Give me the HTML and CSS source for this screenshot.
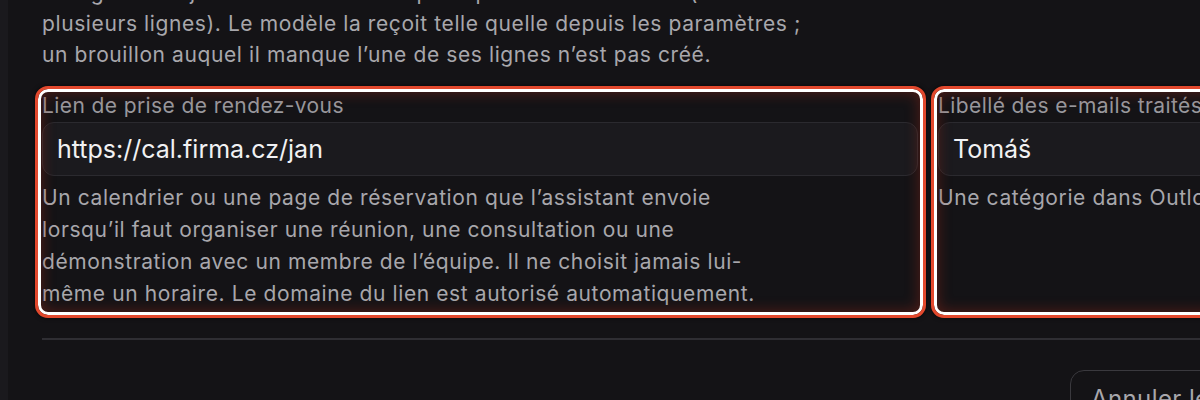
FILE: index.html
```html
<!DOCTYPE html>
<html lang="fr">
<head>
<meta charset="utf-8">
<title>Paramètres</title>
<link rel="stylesheet" href="styles.css">
</head>
<body>
<div class="app">
  <div class="rail"></div>
  <main class="main">
    <p class="intro">La signature ajoutée en bas de chaque réponse de l’assistant (sur plusieurs lignes). Le modèle la reçoit telle quelle depuis les paramètres&nbsp;; un brouillon auquel il manque l’une de ses lignes n’est pas créé.</p>

    <div class="fields">
      <div class="field hl">
        <label class="label">Lien de prise de rendez-vous</label>
        <div class="input">https://cal.firma.cz/jan</div>
        <p class="help">Un calendrier ou une page de réservation que l’assistant envoie lorsqu’il faut organiser une réunion, une consultation ou une démonstration avec un membre de l’équipe. Il ne choisit jamais lui-même un horaire. Le domaine du lien est autorisé automatiquement.</p>
      </div>
      <div class="field hl">
        <label class="label">Libellé des e-mails traités par l’assistant</label>
        <div class="input">Tomáš</div>
        <p class="help">Une catégorie dans Outlook appliquée aux e-mails déjà traités.</p>
      </div>
    </div>

    <hr class="divider">

    <div class="actions">
      <button class="btn">Annuler les modifications</button>
      <button class="btn primary">Enregistrer</button>
    </div>
  </main>
</div>
</body>
</html>
```

FILE: styles.css
```css
* { box-sizing: border-box; }
html, body {
  margin: 0;
  padding: 0;
  background: #141316;
  height: 100%;
  overflow: hidden;
}
body {
  font-family: Inter, "Noto Sans", "DejaVu Sans", sans-serif;
  color: #a8a7ac;
}
.app {
  display: flex;
  min-height: 100%;
}
.rail {
  width: 8px;
  flex: none;
  background: #1a191d;
}
.main {
  flex: 1;
  padding-left: 34px;
  min-width: 0;
}
.intro {
  margin: -23px 0 0;
  max-width: 780px;
  font-size: 21px;
  letter-spacing: 0.6px;
  line-height: 31px;
  color: #a8a7ac;
}
.fields {
  display: grid;
  grid-template-columns: 876px 876px;
  column-gap: 20px;
  margin-top: 24px;
}
.field {
  position: relative;
  display: flex;
  flex-direction: column;
}
.label {
  font-size: 21px;
  letter-spacing: 0.4px;
  line-height: 24px;
  color: #99989d;
  white-space: nowrap;
}
.input {
  margin-top: 4px;
  height: 54px;
  display: flex;
  align-items: center;
  padding: 0 14px;
  background: #1b1a1e;
  border: 1px solid #2b2a2f;
  border-radius: 12px;
  font-size: 25px;
  color: #f1f1f3;
  white-space: nowrap;
}
.help {
  margin: 6px 0 0;
  max-width: 730px;
  font-size: 21px;
  letter-spacing: 0.6px;
  line-height: 32px;
  color: #a8a7ac;
}
.hl::after {
  content: "";
  position: absolute;
  top: -8px;
  bottom: -8px;
  left: -7px;
  right: -8px;
  border: 3px solid #e2482d;
  border-radius: 13px;
  box-shadow:
    inset 0 0 0 3px #ffffff,
    inset 0 0 14px 4px rgba(150, 40, 25, 0.45),
    0 0 4px rgba(0, 0, 0, 0.7);
  pointer-events: none;
}
.divider {
  margin: 28px 0 0;
  border: 0;
  border-top: 2px solid #2f2e33;
}
.actions {
  display: flex;
  gap: 12px;
  margin-top: 30px;
  padding-left: 1028px;
}
.btn {
  flex: none;
  font-family: inherit;
  font-size: 24px;
  letter-spacing: 0.4px;
  padding: 13px 20px;
  border-radius: 14px;
  border: 1px solid #3a393e;
  background: #141316;
  color: #a8a7ac;
  white-space: nowrap;
}
.btn.primary {
  background: #e9e9ec;
  color: #141316;
}
```
